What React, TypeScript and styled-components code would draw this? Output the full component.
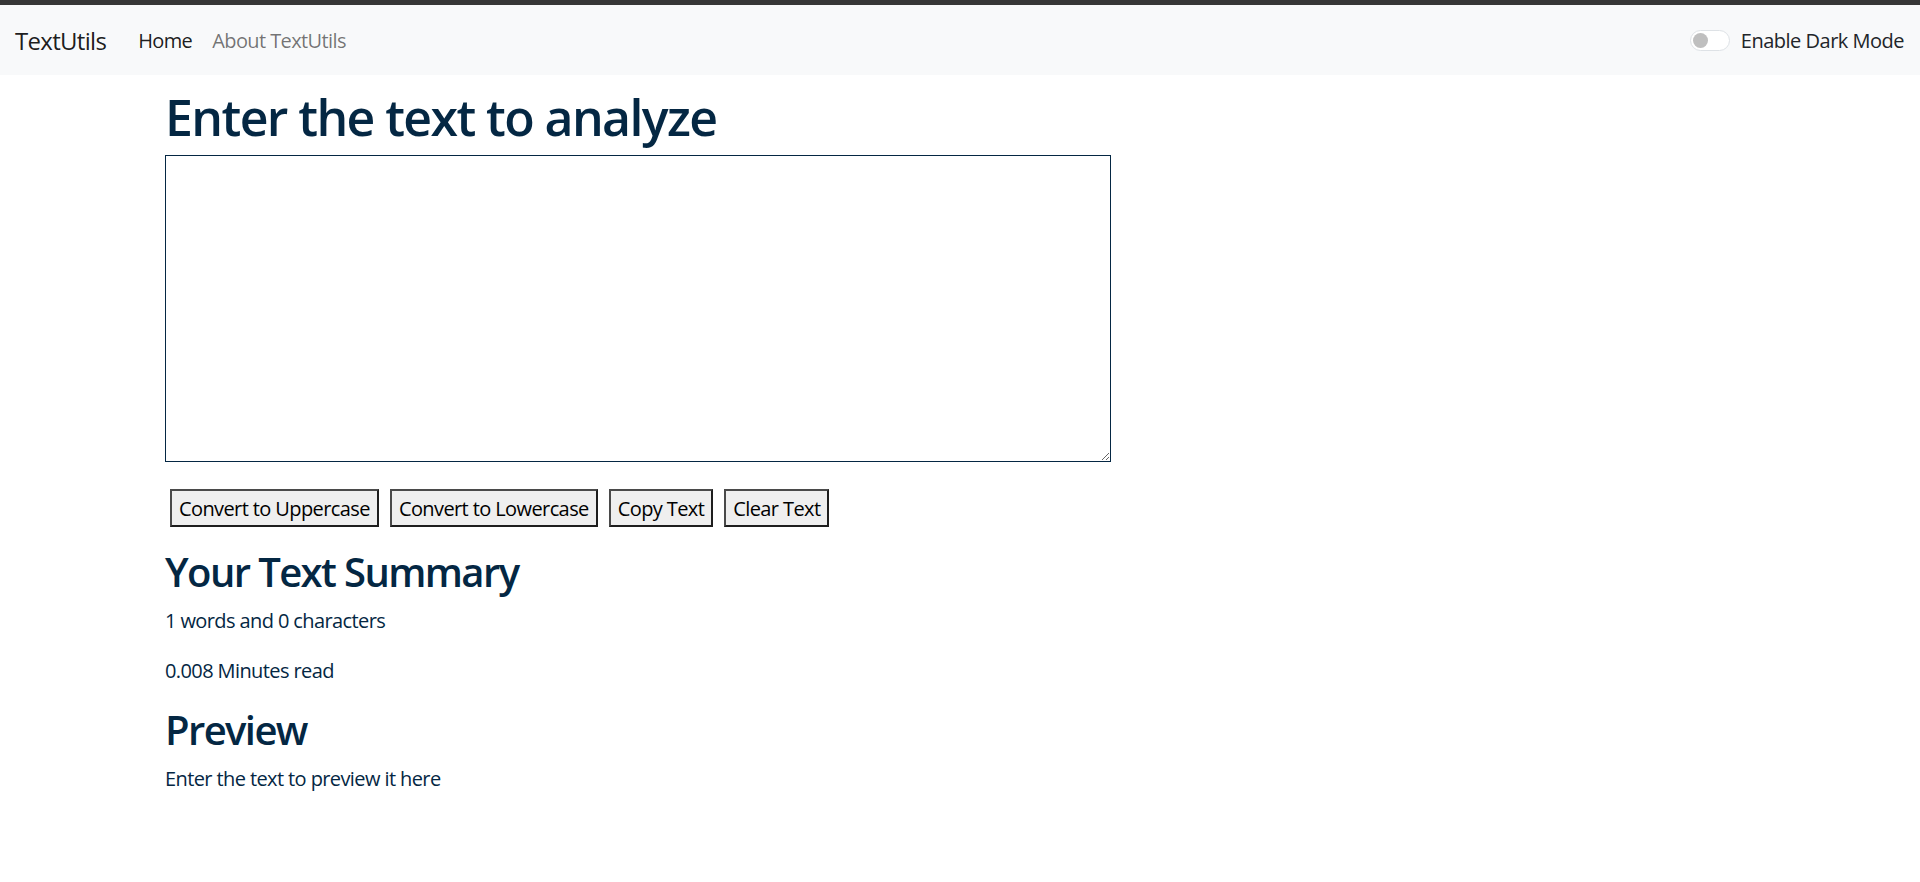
import React, { useState } from "react";
import styled, { createGlobalStyle } from "styled-components";

const GlobalStyle = createGlobalStyle`
  html, body { margin: 0; padding: 0; background: #ffffff; }
  body {
    font-family: "Open Sans", "Noto Sans", "Liberation Sans", sans-serif;
    color: #212529;
    -webkit-font-smoothing: antialiased;
  }
  * { box-sizing: border-box; }
`;

const TopStrip = styled.div`
  height: 5px;
  background: #363636;
`;

const Navbar = styled.nav`
  height: 70px;
  background: #f8f9fa;
  display: flex;
  align-items: center;
  padding: 0 16px 0 15px;
`;

const Brand = styled.a`
  font-size: 24px;
  color: rgba(0, 0, 0, 0.9);
  text-decoration: none;
  margin-right: 22px;
  letter-spacing: -0.7px;
`;

const NavList = styled.ul`
  display: flex;
  list-style: none;
  margin: 0;
  padding: 0;
`;

const NavLink = styled.a<{ $active?: boolean }>`
  display: block;
  font-size: 20px;
  padding: 0 10px;
  letter-spacing: -0.6px;
  text-decoration: none;
  color: ${(p) => (p.$active ? "rgba(0,0,0,0.9)" : "rgba(0,0,0,0.55)")};
`;

const Spacer = styled.div`
  flex: 1;
`;

const SwitchTrack = styled.button<{ $on: boolean }>`
  width: 40px;
  height: 21px;
  border-radius: 11px;
  border: 1px solid #dee2e6;
  background: ${(p) => (p.$on ? "#0d6efd" : "#ffffff")};
  padding: 0 2px;
  display: flex;
  align-items: center;
  justify-content: ${(p) => (p.$on ? "flex-end" : "flex-start")};
  cursor: pointer;
  margin-right: 11px;
`;

const SwitchKnob = styled.span<{ $on: boolean }>`
  width: 15px;
  height: 15px;
  border-radius: 50%;
  background: ${(p) => (p.$on ? "#ffffff" : "#bfbfbf")};
`;

const SwitchLabel = styled.label`
  font-size: 20px;
  color: #212529;
  letter-spacing: -0.5px;
`;

const Main = styled.main`
  padding: 12px 0 40px 165px;
  color: #042743;
`;

const Title = styled.h1`
  margin: 0 0 8px;
  font-size: 50px;
  line-height: 60px;
  font-weight: 600;
  letter-spacing: -1.6px;
`;

const TextBox = styled.textarea`
  display: block;
  width: 946px;
  height: 307px;
  border: 1px solid #042743;
  background: #ffffff;
  color: #042743;
  font-family: inherit;
  font-size: 20px;
  outline: none;
  margin: 0;
`;

const ButtonRow = styled.div`
  display: flex;
  gap: 11px;
  margin-top: 27px;
  padding-left: 5px;
`;

const ActionButton = styled.button`
  height: 38px;
  padding: 0 7px;
  font-family: inherit;
  font-size: 20px;
  letter-spacing: -0.6px;
  color: #000000;
  background: #efefef;
  border: 2px solid;
  border-color: #4a4a4a #1e1e1e #1e1e1e #4a4a4a;
  cursor: pointer;
`;

const SectionTitle = styled.h2<{ $first?: boolean }>`
  margin: ${(p) => (p.$first ? "21px" : "0")} 0 10px;
  font-size: 40px;
  line-height: 48px;
  font-weight: 600;
  letter-spacing: -1.6px;
`;

const Para = styled.p`
  margin: 0 0 20px;
  font-size: 20px;
  line-height: 30px;
  letter-spacing: -0.6px;
`;

export default function App() {
  const [text, setText] = useState("");
  const [dark, setDark] = useState(false);
  const words = text.split(" ").length;
  return (
    <>
      <GlobalStyle />
      <TopStrip />
      <Navbar>
        <Brand href="#">TextUtils</Brand>
        <NavList>
          <li>
            <NavLink href="#" $active>
              Home
            </NavLink>
          </li>
          <li>
            <NavLink href="#">About TextUtils</NavLink>
          </li>
        </NavList>
        <Spacer />
        <SwitchTrack $on={dark} onClick={() => setDark(!dark)} aria-label="toggle">
          <SwitchKnob $on={dark} />
        </SwitchTrack>
        <SwitchLabel>Enable Dark Mode</SwitchLabel>
      </Navbar>
      <Main>
        <Title>Enter the text to analyze</Title>
        <TextBox value={text} onChange={(e) => setText(e.target.value)} />
        <ButtonRow>
          <ActionButton onClick={() => setText(text.toUpperCase())}>Convert to Uppercase</ActionButton>
          <ActionButton onClick={() => setText(text.toLowerCase())}>Convert to Lowercase</ActionButton>
          <ActionButton>Copy Text</ActionButton>
          <ActionButton onClick={() => setText("")}>Clear Text</ActionButton>
        </ButtonRow>
        <SectionTitle $first>Your Text Summary</SectionTitle>
        <Para>
          {words} words and {text.length} characters
        </Para>
        <Para>{(0.008 * words).toString()} Minutes read</Para>
        <SectionTitle>Preview</SectionTitle>
        <Para>{text.length > 0 ? text : "Enter the text to preview it here"}</Para>
      </Main>
    </>
  );
}
